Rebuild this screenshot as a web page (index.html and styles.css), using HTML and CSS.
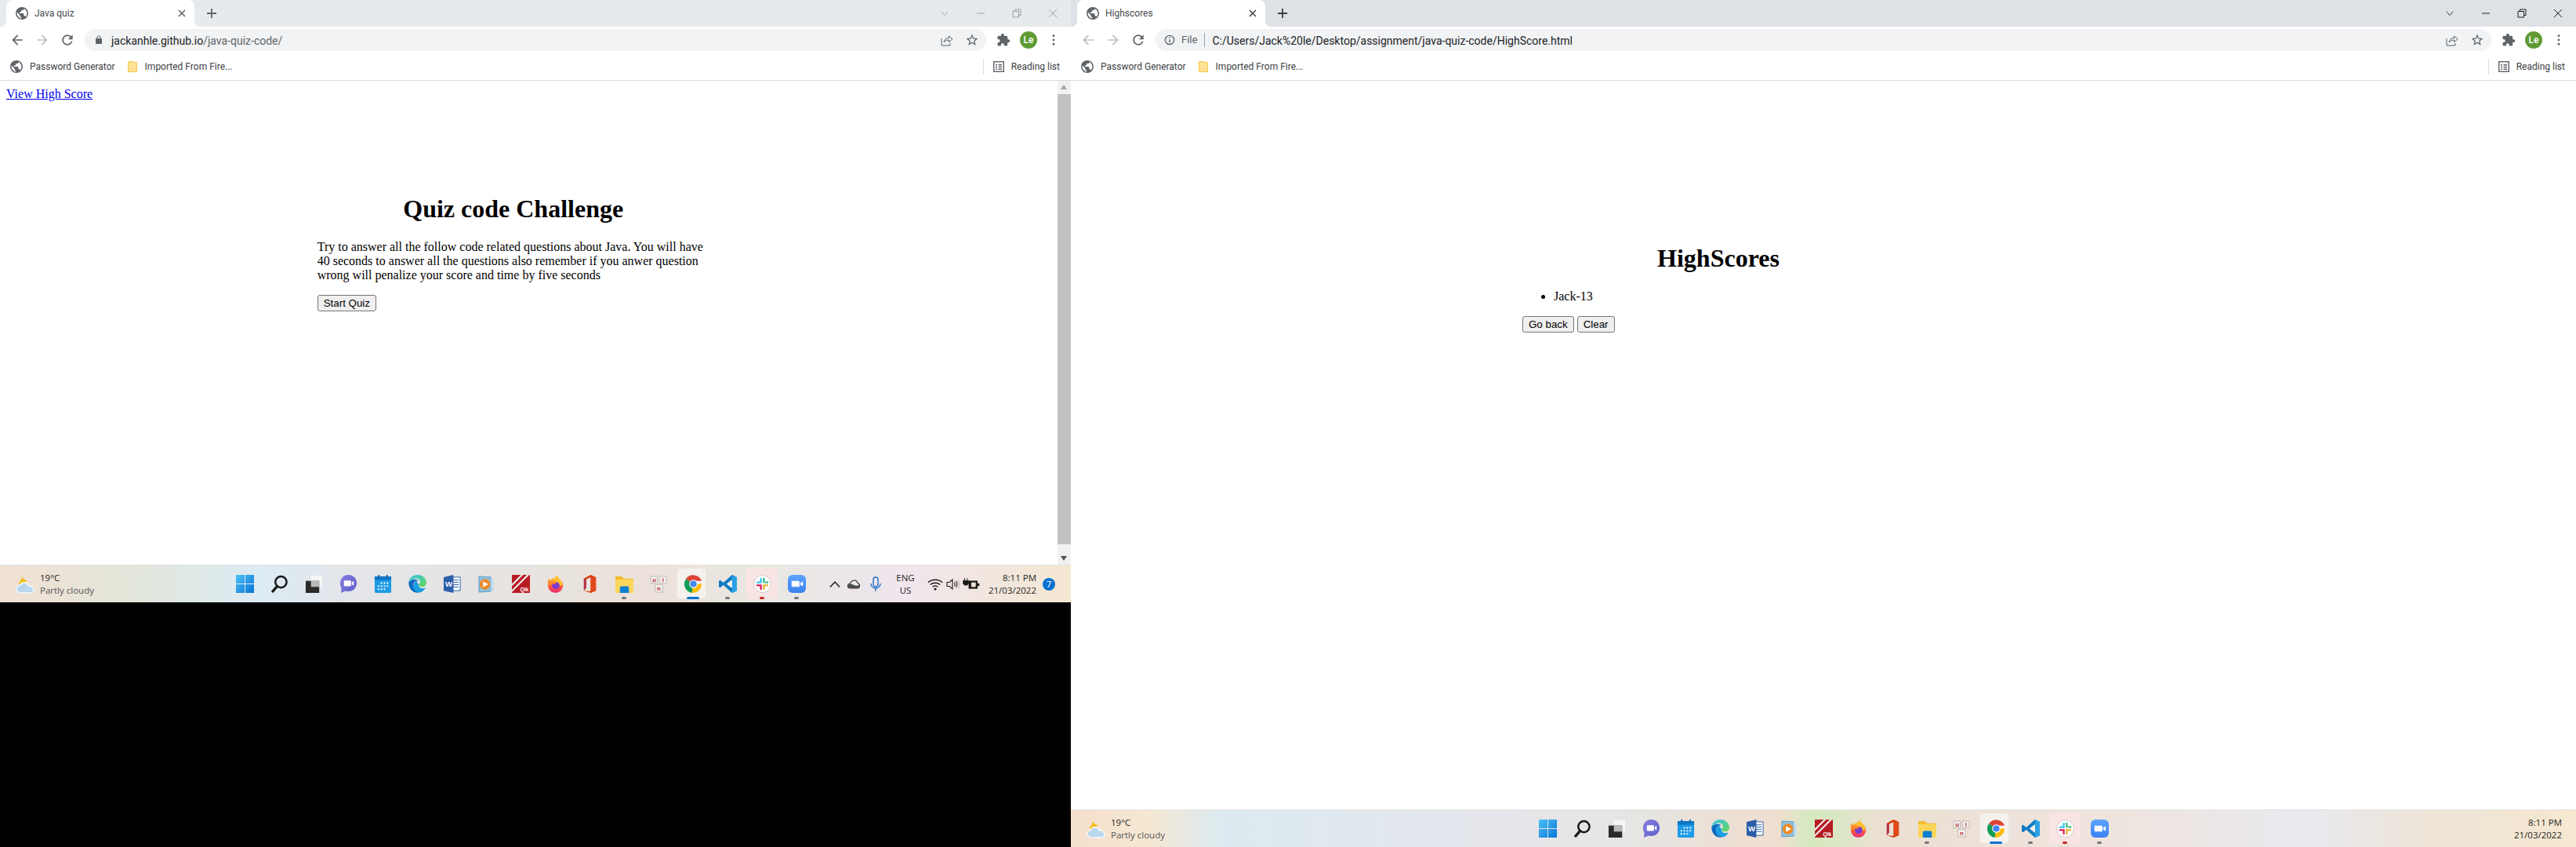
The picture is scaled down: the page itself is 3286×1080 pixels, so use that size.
FILE: index.html
```html
<!DOCTYPE html>
<html lang="en">

<head>
    <meta charset="UTF-8">
    <title>Java quiz</title>
    <link rel="stylesheet" href="styles.css">
</head>

<body>
    <!-- Shared icons -->
    <svg class="sprite" aria-hidden="true">
        <defs>
            <linearGradient id="win-blue" x1="0" y1="0" x2="1" y2="1">
                <stop offset="0" stop-color="#4cc2f7" />
                <stop offset="1" stop-color="#0a74d6" />
            </linearGradient>
            <linearGradient id="chat-purple" x1="0" y1="0" x2="1" y2="1">
                <stop offset="0" stop-color="#8a7ce0" />
                <stop offset="1" stop-color="#5b5fc7" />
            </linearGradient>
            <linearGradient id="edge-green" x1="0" y1="0" x2="1" y2="1">
                <stop offset="0" stop-color="#35c1f1" />
                <stop offset="1" stop-color="#66d853" />
            </linearGradient>
            <linearGradient id="fox-fire" x1="0" y1="0" x2="0" y2="1">
                <stop offset="0" stop-color="#ffc02e" />
                <stop offset="0.55" stop-color="#ff5a36" />
                <stop offset="1" stop-color="#e6297a" />
            </linearGradient>
            <linearGradient id="zoom-blue" x1="0" y1="0" x2="0" y2="1">
                <stop offset="0" stop-color="#5ea4ff" />
                <stop offset="1" stop-color="#3a82f0" />
            </linearGradient>
        </defs>

        <symbol id="i-globe" viewBox="0 0 16 16">
            <circle cx="8" cy="8" r="8" fill="#5f6368" />
            <path fill="#fff" d="M7.2 14.4C4.2 14 1.6 11.300 1.600 8c0-.5.100-1 .2-1.400L5.600 10.400v.8c0 .9.700 1.600 1.600 1.600zM12.700 12.400c-.2-.6-.8-1.200-1.500-1.200h-.8V8.800c0-.4-.4-.8-.8-.8H4.800V6.400h1.600c.4 0 .8-.4.800-.8V4h1.600c.9 0 1.600-.7 1.600-1.600v-.3c2.300.9 4 3.200 4 5.900 0 1.700-.7 3.200-1.700 4.400z" />
        </symbol>
        <symbol id="i-close" viewBox="0 0 12 12">
            <path d="M2 2l8 8M10 2l-8 8" fill="none" stroke="currentColor" stroke-width="1.500" />
        </symbol>
        <symbol id="i-plus" viewBox="0 0 14 14">
            <path d="M7 1v12M1 7h12" fill="none" stroke="currentColor" stroke-width="1.800" />
        </symbol>
        <symbol id="i-back" viewBox="0 0 24 24">
            <path fill="currentColor" d="M20 11H7.830l5.590-5.590L12 4l-8 8 8 8 1.410-1.410L7.830 13H20v-2z" />
        </symbol>
        <symbol id="i-forward" viewBox="0 0 24 24">
            <path fill="currentColor" d="M12 4l-1.410 1.410L16.170 11H4v2h12.170l-5.580 5.590L12 20l8-8z" />
        </symbol>
        <symbol id="i-reload" viewBox="0 0 24 24">
            <path fill="currentColor" d="M17.650 6.350C16.200 4.900 14.210 4 12 4c-4.420 0-7.990 3.580-7.990 8s3.570 8 7.990 8c3.730 0 6.840-2.550 7.730-6h-2.080c-.82 2.330-3.040 4-5.650 4-3.310 0-6-2.690-6-6s2.690-6 6-6c1.660 0 3.140.69 4.220 1.780L13 11h7V4l-2.350 2.350z" />
        </symbol>
        <symbol id="i-lock" viewBox="0 0 24 24">
            <path fill="currentColor" fill-rule="evenodd" d="M18 8h-1V6c0-2.760-2.240-5-5-5S7 3.240 7 6v2H6c-1.100 0-2 .9-2 2v10c0 1.100.9 2 2 2h12c1.100 0 2-.9 2-2V10c0-1.100-.9-2-2-2zM9 8V6c0-1.660 1.340-3 3-3s3 1.340 3 3v2H9z" />
        </symbol>
        <symbol id="i-info" viewBox="0 0 16 16">
            <circle cx="8" cy="8" r="6.500" fill="none" stroke="currentColor" stroke-width="1.500" />
            <path d="M7.200 7h1.600v5H7.200zM7.200 4h1.600v1.600H7.200z" fill="currentColor" />
        </symbol>
        <symbol id="i-share" viewBox="0 0 16 16">
            <path d="M1 6v9h11v-3" fill="none" stroke="currentColor" stroke-width="1" />
            <path d="M4 11c.5-3.500 3-5.500 6.500-5.500V3L15 6.800l-4.500 3.800V8C8 8 5.800 9 4 11z" fill="none" stroke="currentColor" stroke-width="1" />
        </symbol>
        <symbol id="i-star" viewBox="0 0 24 24">
            <path fill="currentColor" d="M22 9.240l-7.190-.62L12 2 9.190 8.630 2 9.240l5.460 4.730L5.820 21 12 17.270 18.180 21l-1.630-7.030L22 9.240zM12 15.400l-3.760 2.270 1-4.280-3.320-2.880 4.380-.38L12 6.100l1.710 4.040 4.380.38-3.320 2.880 1 4.280L12 15.400z" />
        </symbol>
        <symbol id="i-puzzle" viewBox="0 0 24 24">
            <path fill="currentColor" d="M20.500 11H19V7c0-1.100-.9-2-2-2h-4V3.500C13 2.120 11.880 1 10.500 1S8 2.120 8 3.500V5H4c-1.100 0-1.990.9-1.990 2v3.800H3.500c1.490 0 2.700 1.210 2.700 2.700s-1.210 2.700-2.700 2.700H2V20c0 1.100.9 2 2 2h3.800v-1.500c0-1.490 1.210-2.700 2.700-2.700 1.490 0 2.700 1.210 2.700 2.700V22H17c1.100 0 2-.9 2-2v-4h1.500c1.380 0 2.500-1.120 2.500-2.500S21.880 11 20.500 11z" />
        </symbol>
        <symbol id="i-dots" viewBox="0 0 4 16">
            <circle cx="2" cy="2" r="1.600" fill="currentColor" />
            <circle cx="2" cy="8" r="1.600" fill="currentColor" />
            <circle cx="2" cy="14" r="1.600" fill="currentColor" />
        </symbol>
        <symbol id="i-folder" viewBox="0 0 12 14">
            <path d="M.5.500h7l1 1h3v12H.5z" fill="#fde293" stroke="#f2c94c" />
        </symbol>
        <symbol id="i-reading" viewBox="0 0 14 14">
            <rect x=".7" y=".7" width="12.600" height="12.600" fill="none" stroke="#5f6368" stroke-width="1.400" />
            <path d="M3 4h2v1.500H3zM6.500 4H11v1.500H6.500zM3 6.800h2v1.500H3zM6.500 6.800H11v1.500H6.500zM3 9.600h2v1.500H3zM6.500 9.600H11v1.500H6.500z" fill="#5f6368" />
        </symbol>

        <symbol id="a-weather" viewBox="0 0 24 24">
            <path d="M8 0c0 4 2 6 6 7-1 4-6 6-11 4 3-2 5-6 5-11z" fill="#f5bb14" />
            <path d="M7 23c-3.500 0-6-2.200-6-5 0-2.500 2-4.500 4.500-4.500C6.500 10.500 9.500 9 12.500 10c2 .7 3.500 2.200 4 4 3.500 0 6.500 2.200 6.500 5 0 2.500-2 4-4.500 4z" fill="#b9d8ee" stroke="#f4f9fc" stroke-width="1.400" />
        </symbol>
        <symbol id="a-windows" viewBox="0 0 24 24">
            <path d="M0 0h11.500v11.500H0zM12.500 0H24v11.500H12.500zM0 12.500h11.500V24H0zM12.500 12.500H24V24H12.500z" fill="url(#win-blue)" />
        </symbol>
        <symbol id="a-search" viewBox="0 0 24 24">
            <circle cx="14" cy="9.500" r="7.500" fill="none" stroke="#1a1a1a" stroke-width="2.600" />
            <path d="M9 15l-6 7" stroke="#1a1a1a" stroke-width="3.400" stroke-linecap="round" />
        </symbol>
        <symbol id="a-taskview" viewBox="0 0 24 24">
            <rect x="8" y="1" width="15" height="15" fill="#f6f6f6" />
            <rect x="1" y="8" width="18" height="16" fill="#2a2a2a" />
            <rect x="8" y="8" width="11" height="8" fill="#b9b9b9" />
        </symbol>
        <symbol id="a-chat" viewBox="0 0 24 24">
            <path d="M12 0c6.500 0 11 5 11 11s-4.500 11-11 11c-1.500 0-3-.2-4-.7L2 24l.8-6C1.600 16 1 13.500 1 11 1 5 5.500 0 12 0z" fill="url(#chat-purple)" />
            <path d="M7 7.500h7.500c.6 0 1 .4 1 1v5.500c0 .6-.4 1-1 1H7c-.6 0-1-.4-1-1V8.500c0-.6.400-1 1-1zM16.500 10l2.500-2v6.500l-2.500-2z" fill="#fff" />
        </symbol>
        <symbol id="a-calendar" viewBox="0 0 24 24">
            <rect x="1" y="2" width="22" height="22" rx="1.500" fill="#1d9be6" />
            <path d="M1 2h22v5H1z" fill="#0f78c9" />
            <path d="M5.500 0h2v4h-2zM16.500 0h2v4h-2z" fill="#0c5fa6" />
            <path d="M9 10h2v2H9zM13 10h2v2h-2zM17 10h2v2h-2zM5 14h2v2H5zM9 14h2v2H9zM13 14h2v2h-2zM17 14h2v2h-2zM5 18h2v2H5zM9 18h2v2H9zM13 18h2v2h-2z" fill="#fff" />
        </symbol>
        <symbol id="a-edge" viewBox="0 0 24 24">
            <path d="M12 0c7 0 12 5 12 11 0 3-2.500 5-6 5-2.500 0-4.500-1-4.500-2.500 0-2 2-1.500 2-4C15.500 6 12 4 8 5 4 6 1.500 8 .3 10 1 4 6 0 12 0z" fill="url(#edge-green)" />
            <path d="M.3 10C3 5.500 10 4.500 13.500 8c-4-1-7 2-7 6 0 4 3 8 8 9.500C7 25.500 0 19 .3 10z" fill="#0c6cc0" />
            <path d="M13.500 13.500c0 3 3 4.500 5.500 4.500 1.500 0 3-.4 4-1-2 4-5 6.500-9 6.500-5-1.500-7.500-5-7.500-9 0-3 2-6 5-6.500-1 1.500 2 3.500 2 5.500z" fill="#1b9de2" />
        </symbol>
        <symbol id="a-word" viewBox="0 0 24 24">
            <path d="M10 3h13v18H10z" fill="#fff" stroke="#2b5ea8" />
            <path d="M13 7h8M13 10h8M13 13h8M13 16h8" stroke="#2b5ea8" />
            <path d="M1 3l13-3v24L1 21z" fill="#2b5ea8" />
        </symbol>
        <symbol id="a-media" viewBox="0 0 24 24">
            <path d="M2 2l16 1v19L2 23z" fill="#8fc1e0" stroke="#5d9cc4" />
            <path d="M18 3l4 3v16l-4 0z" fill="#c7dced" />
            <circle cx="10" cy="12.500" r="7" fill="#f08a24" />
            <path d="M7.500 8.500l7 4-7 4z" fill="#fff" />
        </symbol>
        <symbol id="a-qlik" viewBox="0 0 24 24">
            <rect width="24" height="24" rx="1" fill="#b71c23" />
            <path d="M0 12L12 0h3L0 15zM0 20L20 0h3L0 23z" fill="#f2f2f2" />
        </symbol>
        <symbol id="a-firefox" viewBox="0 0 24 24">
            <circle cx="12" cy="14" r="10" fill="url(#fox-fire)" />
            <path d="M13 0c1 3 4 4 6 7 2 2 2 5 2 7H8c0-5 3-7 5-14z" fill="#ffc02e" />
            <path d="M3 5c-1 3-1.500 6-1 9l6-2z" fill="#ff8a2b" />
            <circle cx="12.500" cy="14" r="5" fill="#7a3bd1" />
            <path d="M7 11c2-2 5-3 8-1-2 0-3 1-3 2-2 1-4 0-5-1z" fill="#ff7a2f" />
        </symbol>
        <symbol id="a-office" viewBox="0 0 24 24">
            <path d="M13 0l7 3v18l-7 3-9-3 9 1V3L7 6v11l-3 4V5z" fill="#d83b01" />
            <path d="M4 5l3 1v11l-3 4z" fill="#b2314a" />
            <path d="M13 3v19l7-1V3z" fill="#e0491c" />
        </symbol>
        <symbol id="a-explorer" viewBox="0 0 24 24">
            <path d="M0 2h9l2 3h13v19H0z" fill="#f2b92e" />
            <path d="M0 6h24v18H0z" fill="#fdd75c" />
            <path d="M6 17c0-1 1-2 2-2h8c1 0 2 1 2 2v7H6z" fill="#0f7fd1" />
        </symbol>
        <symbol id="a-keys" viewBox="0 0 24 24">
            <path d="M1 2h9v9H1zM13 2h9v9h-9zM7 13h10v10H7z" fill="#f4f1ef" stroke="#bdb8b4" />
        </symbol>
        <symbol id="a-chrome" viewBox="0 0 24 24">
            <path d="M12 12L2 5.500A12 12 0 0 1 23 8H12z" fill="#db4437" />
            <path d="M12 12L10 24A12 12 0 0 1 2 5.500z" fill="#0f9d58" />
            <path d="M12 12H23A12 12 0 0 1 10 24z" fill="#fbbc05" />
            <circle cx="12" cy="12" r="5.500" fill="#fff" />
            <circle cx="12" cy="12" r="4.300" fill="#4285f4" />
        </symbol>
        <symbol id="a-vscode" viewBox="0 0 24 24">
            <path d="M17.500 0L24 3v18l-6.500 3L6 13.500 2 17l-2-1v-8l2-1 4 3.500zM17.500 6.500L10.500 12l7 5.500z" fill="#0f7cc4" fill-rule="evenodd" />
            <path d="M17.500 0L24 3v18l-6.500 3z" fill="#29a1e6" />
            <path d="M17.500 6.500L10.500 12l7 5.500z" fill="#fdf3ee" />
        </symbol>
        <symbol id="a-slack" viewBox="0 0 24 24">
            <circle cx="12" cy="12" r="11.500" fill="#fff" stroke="#c9c3c2" />
            <path d="M10 5v5H5" fill="none" stroke="#36c5f0" stroke-width="2.400" stroke-linecap="round" />
            <path d="M14 5v5" fill="none" stroke="#2eb67d" stroke-width="2.400" stroke-linecap="round" />
            <path d="M19 10h-2" fill="none" stroke="#2eb67d" stroke-width="2.400" stroke-linecap="round" />
            <path d="M14 19v-5h5" fill="none" stroke="#ecb22e" stroke-width="2.400" stroke-linecap="round" />
            <path d="M5 14h5v5" fill="none" stroke="#e01e5a" stroke-width="2.400" stroke-linecap="round" />
        </symbol>
        <symbol id="a-zoom" viewBox="0 0 24 24">
            <rect width="24" height="24" rx="6" fill="url(#zoom-blue)" />
            <path d="M5 8h9c1 0 1.500.6 1.500 1.500V16H6.500C5.500 16 5 15.400 5 14.500zM16.500 11l3.500-2.500v7L16.500 13z" fill="#fff" />
        </symbol>

        <symbol id="t-up" viewBox="0 0 16 16">
            <path d="M2 11.500L8 5l6 6.500" fill="none" stroke="#1a1a1a" stroke-width="1.500" />
        </symbol>
        <symbol id="t-cloud" viewBox="0 0 16 16">
            <path d="M4 13c-2 0-3.500-1.200-3.500-3S2 7 3.500 7C4.500 4.500 6.500 3 9 3c2 0 3.500 1.500 4 3.500 1.500.3 2.500 1.700 2.500 3.200 0 2-1.500 3.300-3.500 3.300z" fill="#e8e8e8" stroke="#262626" stroke-width="1.200" />
            <path d="M1 9c3-2 5-1 7 0s5 1 7 0c0 2-1 4-3 4H4C2 13 1 11 1 9z" fill="#4a4a4a" />
        </symbol>
        <symbol id="t-mic" viewBox="0 0 16 20">
            <rect x="5" y="1" width="6" height="12" rx="3" fill="none" stroke="#2a6fc9" stroke-width="1.400" />
            <path d="M2 9c0 4 3 6 6 6s6-2 6-6M8 15v4" fill="none" stroke="#2a6fc9" stroke-width="1.400" />
        </symbol>
        <symbol id="t-wifi" viewBox="0 0 18 14">
            <path d="M1 5c4.500-4 11.500-4 16 0M3.500 7.500c3-2.700 8-2.700 11 0M6 10c1.700-1.400 4.300-1.400 6 0" fill="none" stroke="#1a1a1a" stroke-width="1.200" />
            <circle cx="9" cy="12.500" r="1.300" fill="#1a1a1a" />
        </symbol>
        <symbol id="t-speaker" viewBox="0 0 18 16">
            <path d="M1 5.500h3L8 2v12l-4-3.500H1z" fill="none" stroke="#1a1a1a" stroke-width="1.100" />
            <path d="M10.500 5.500c1 1.500 1 3.500 0 5M12.500 4c1.500 2.300 1.500 5.700 0 8" fill="none" stroke="#1a1a1a" stroke-width="1.100" />
            <path d="M15 2.500c2 3 2 8 0 11" fill="none" stroke="#bdbdbd" stroke-width="1.100" />
        </symbol>
        <symbol id="t-battery" viewBox="0 0 20 14">
            <path d="M7 3h10v9H7z" fill="#1a1a1a" />
            <path d="M17 6h2v3h-2z" fill="#1a1a1a" />
            <path d="M10 5h5v5h-5z" fill="#f0e4d4" />
            <path d="M2.500 0v3M5.500 0v3M1 3h6v3c0 1-1 2-3 2S1 7 1 6z" fill="#1a1a1a" stroke="#1a1a1a" stroke-width=".8" />
        </symbol>
    </svg>

    <!-- Left window, small with the desktop showing under it -->
    <section class="window window-small">
        <header class="chrome">
            <div class="tab-strip tab-strip-inactive">
                <div class="tab">
                    <svg class="tab-icon"><use href="#i-globe" /></svg>
                    <span class="tab-title">Java quiz</span>
                    <svg class="tab-close"><use href="#i-close" /></svg>
                </div>
                <svg class="new-tab"><use href="#i-plus" /></svg>
                <div class="window-controls">
                    <svg class="control-icon control-chevron" viewBox="0 0 12 12"><path d="M1 3l5 6 5-6" /></svg>
                    <svg class="control-icon" viewBox="0 0 12 12"><path d="M1 6h10" /></svg>
                    <svg class="control-icon" viewBox="0 0 12 12"><path d="M1 3.500h7.500V11H1zM3.500 3.500V1H11v7.500H8.500" /></svg>
                    <svg class="control-icon" viewBox="0 0 12 12"><path d="M1 1l10 10M11 1L1 11" /></svg>
                </div>
            </div>
            <div class="toolbar">
                <svg class="nav-icon"><use href="#i-back" /></svg>
                <svg class="nav-icon nav-disabled"><use href="#i-forward" /></svg>
                <svg class="nav-icon"><use href="#i-reload" /></svg>
                <div class="omnibox">
                    <svg class="omni-lock"><use href="#i-lock" /></svg>
                    <span class="url">jackanhle.github.io<span class="url-path">/java-quiz-code/</span></span>
                    <svg class="omni-share"><use href="#i-share" /></svg>
                    <svg class="omni-star"><use href="#i-star" /></svg>
                </div>
                <svg class="nav-icon nav-puzzle"><use href="#i-puzzle" /></svg>
                <div class="avatar-cell"><span class="avatar">Le</span></div>
                <svg class="nav-icon nav-dots"><use href="#i-dots" /></svg>
            </div>
            <div class="bookmarks">
                <span class="bookmark"><svg class="bookmark-icon"><use href="#i-globe" /></svg>Password Generator</span>
                <span class="bookmark"><svg class="bookmark-folder"><use href="#i-folder" /></svg>Imported From Fire...</span>
                <span class="reading-list"><svg class="bookmark-reading"><use href="#i-reading" /></svg>Reading list</span>
            </div>
        </header>

        <div class="viewport">
            <main class="page">
                <a class="high-score-link" href="#">View High Score</a>
                <div class="panel panel-quiz">
                    <h1>Quiz code Challenge</h1>
                    <p>Try to answer all the follow code related questions about Java. You will have 40 seconds to answer all the questions also remember if you anwer question wrong will penalize your score and time by five seconds</p>
                    <button>Start Quiz</button>
                </div>
            </main>
            <div class="scrollbar">
                <div class="scroll-arrow scroll-arrow-up"></div>
                <div class="scroll-thumb"></div>
                <div class="scroll-arrow scroll-arrow-down"></div>
            </div>
        </div>

        <footer class="taskbar taskbar-small">
            <div class="weather">
                <svg class="weather-icon"><use href="#a-weather" /></svg>
                <div class="weather-text"><span>19°C</span><span class="weather-sub">Partly cloudy</span></div>
            </div>
            <div class="apps apps-small">
                <span class="app"><svg><use href="#a-windows" /></svg></span>
                <span class="app"><svg><use href="#a-search" /></svg></span>
                <span class="app"><svg><use href="#a-taskview" /></svg></span>
                <span class="app"><svg><use href="#a-chat" /></svg></span>
                <span class="app"><svg><use href="#a-calendar" /></svg></span>
                <span class="app"><svg><use href="#a-edge" /></svg></span>
                <span class="app"><svg viewBox="0 0 24 24"><use href="#a-word" /><text x="3" y="15.500" class="icon-word">W</text></svg></span>
                <span class="app"><svg><use href="#a-media" /></svg></span>
                <span class="app"><svg viewBox="0 0 24 24"><use href="#a-qlik" /><text x="11" y="22" class="icon-qlik">Qlk</text></svg></span>
                <span class="app"><svg><use href="#a-firefox" /></svg></span>
                <span class="app"><svg><use href="#a-office" /></svg></span>
                <span class="app app-open"><svg><use href="#a-explorer" /></svg></span>
                <span class="app"><svg viewBox="0 0 24 24"><use href="#a-keys" /><text x="3.500" y="9" class="icon-key">u</text><text x="16.500" y="9" class="icon-key">i</text><text x="9.500" y="21" class="icon-key">n</text></svg></span>
                <span class="app app-active"><svg><use href="#a-chrome" /></svg></span>
                <span class="app app-open"><svg><use href="#a-vscode" /></svg></span>
                <span class="app app-alert"><svg><use href="#a-slack" /></svg></span>
                <span class="app app-open"><svg><use href="#a-zoom" /></svg></span>
            </div>
            <div class="tray">
                <svg class="tray-icon"><use href="#t-up" /></svg>
                <svg class="tray-icon"><use href="#t-cloud" /></svg>
                <svg class="tray-icon tray-mic"><use href="#t-mic" /></svg>
                <div class="tray-lang"><span>ENG</span><span>US</span></div>
                <svg class="tray-icon"><use href="#t-wifi" /></svg>
                <svg class="tray-icon tray-speaker"><use href="#t-speaker" /></svg>
                <svg class="tray-icon"><use href="#t-battery" /></svg>
                <div class="clock"><span>8:11 PM</span><span>21/03/2022</span></div>
                <span class="badge">7</span>
            </div>
        </footer>
    </section>

    <!-- Right window, full height -->
    <section class="window window-large">
        <header class="chrome">
            <div class="tab-strip">
                <div class="tab">
                    <svg class="tab-icon"><use href="#i-globe" /></svg>
                    <span class="tab-title">Highscores</span>
                    <svg class="tab-close tab-close-dark"><use href="#i-close" /></svg>
                </div>
                <svg class="new-tab new-tab-dark"><use href="#i-plus" /></svg>
                <div class="window-controls window-controls-dark">
                    <svg class="control-icon control-chevron" viewBox="0 0 12 12"><path d="M1 3l5 6 5-6" /></svg>
                    <svg class="control-icon" viewBox="0 0 12 12"><path d="M1 6h10" /></svg>
                    <svg class="control-icon" viewBox="0 0 12 12"><path d="M1 3.500h7.500V11H1zM3.500 3.500V1H11v7.500H8.500" /></svg>
                    <svg class="control-icon" viewBox="0 0 12 12"><path d="M1 1l10 10M11 1L1 11" /></svg>
                </div>
            </div>
            <div class="toolbar">
                <svg class="nav-icon nav-disabled"><use href="#i-back" /></svg>
                <svg class="nav-icon nav-disabled"><use href="#i-forward" /></svg>
                <svg class="nav-icon"><use href="#i-reload" /></svg>
                <div class="omnibox">
                    <svg class="omni-info"><use href="#i-info" /></svg>
                    <span class="omni-file">File</span>
                    <span class="url">C:/Users/Jack%20le/Desktop/assignment/java-quiz-code/HighScore.html</span>
                    <svg class="omni-share"><use href="#i-share" /></svg>
                    <svg class="omni-star"><use href="#i-star" /></svg>
                </div>
                <svg class="nav-icon nav-puzzle"><use href="#i-puzzle" /></svg>
                <div class="avatar-cell"><span class="avatar">Le</span></div>
                <svg class="nav-icon nav-dots"><use href="#i-dots" /></svg>
            </div>
            <div class="bookmarks">
                <span class="bookmark"><svg class="bookmark-icon"><use href="#i-globe" /></svg>Password Generator</span>
                <span class="bookmark"><svg class="bookmark-folder"><use href="#i-folder" /></svg>Imported From Fire...</span>
                <span class="reading-list"><svg class="bookmark-reading"><use href="#i-reading" /></svg>Reading list</span>
            </div>
        </header>

        <div class="viewport">
            <main class="page">
                <div class="panel panel-scores">
                    <h1>HighScores</h1>
                    <ul>
                        <li>Jack-13</li>
                    </ul>
                    <button>Go back</button>
                    <button>Clear</button>
                </div>
            </main>
        </div>

        <footer class="taskbar taskbar-large">
            <div class="weather">
                <svg class="weather-icon"><use href="#a-weather" /></svg>
                <div class="weather-text"><span>19°C</span><span class="weather-sub">Partly cloudy</span></div>
            </div>
            <div class="apps apps-large">
                <span class="app"><svg><use href="#a-windows" /></svg></span>
                <span class="app"><svg><use href="#a-search" /></svg></span>
                <span class="app"><svg><use href="#a-taskview" /></svg></span>
                <span class="app"><svg><use href="#a-chat" /></svg></span>
                <span class="app"><svg><use href="#a-calendar" /></svg></span>
                <span class="app"><svg><use href="#a-edge" /></svg></span>
                <span class="app"><svg viewBox="0 0 24 24"><use href="#a-word" /><text x="3" y="15.500" class="icon-word">W</text></svg></span>
                <span class="app"><svg><use href="#a-media" /></svg></span>
                <span class="app"><svg viewBox="0 0 24 24"><use href="#a-qlik" /><text x="11" y="22" class="icon-qlik">Qlk</text></svg></span>
                <span class="app"><svg><use href="#a-firefox" /></svg></span>
                <span class="app"><svg><use href="#a-office" /></svg></span>
                <span class="app app-open"><svg><use href="#a-explorer" /></svg></span>
                <span class="app"><svg viewBox="0 0 24 24"><use href="#a-keys" /><text x="3.500" y="9" class="icon-key">u</text><text x="16.500" y="9" class="icon-key">i</text><text x="9.500" y="21" class="icon-key">n</text></svg></span>
                <span class="app app-active"><svg><use href="#a-chrome" /></svg></span>
                <span class="app app-open"><svg><use href="#a-vscode" /></svg></span>
                <span class="app app-alert"><svg><use href="#a-slack" /></svg></span>
                <span class="app app-open"><svg><use href="#a-zoom" /></svg></span>
            </div>
            <div class="tray tray-plain">
                <div class="clock"><span>8:11 PM</span><span>21/03/2022</span></div>
            </div>
        </footer>
    </section>
</body>

</html>
```

FILE: styles.css
```css
/* Global Styles */
html,
body {
    margin: 0;
    padding: 0;
}

body {
    display: flex;
    align-items: flex-start;
    width: 3286px;
    height: 1080px;
    overflow: hidden;
    background-color: #000;
    font-family: 'Liberation Serif', serif;
    font-size: 16px;
}

.sprite {
    width: 0;
    height: 0;
    flex: none;
}

.window {
    display: flex;
    flex-direction: column;
    flex: none;
    background-color: #fff;
}

.window-small {
    width: 1366px;
    height: 768px;
}

.window-large {
    width: 1920px;
    height: 1080px;
}

/* Browser Chrome */
.chrome {
    flex: none;
    font-family: 'Roboto', sans-serif;
    color: #3c4043;
}

.tab-strip {
    display: flex;
    align-items: center;
    height: 34px;
    padding-left: 8px;
    background-color: #dee1e6;
}

.tab-strip-inactive {
    background-color: #e7eaed;
}

.tab {
    position: relative;
    display: flex;
    align-items: center;
    align-self: flex-end;
    box-sizing: border-box;
    width: 240px;
    height: 34px;
    padding: 0 10px 0 12px;
    background-color: #fff;
    border-radius: 8px 8px 0 0;
}

.tab::before,
.tab::after {
    content: "";
    position: absolute;
    bottom: 0;
    width: 8px;
    height: 8px;
}

.tab::before {
    left: -8px;
    background: radial-gradient(circle at 0 0, transparent 8px, #fff 8.5px);
}

.tab::after {
    right: -8px;
    background: radial-gradient(circle at 100% 0, transparent 8px, #fff 8.5px);
}

.tab-icon {
    width: 16px;
    height: 16px;
    flex: none;
}

.tab-title {
    margin-left: 8px;
    font-size: 12px;
    color: #45494d;
}

.tab-close {
    width: 12px;
    height: 12px;
    margin-left: auto;
    color: #5f6368;
}

.tab-close-dark {
    color: #3c4043;
}

.new-tab {
    width: 14px;
    height: 14px;
    margin-left: 15px;
    color: #5f6368;
}

.new-tab-dark {
    color: #3c4043;
}

.window-controls {
    display: flex;
    margin-left: auto;
    color: #9a9da1;
}

.window-controls-dark {
    color: #202124;
}

.control-icon {
    box-sizing: border-box;
    width: 46px;
    height: 12px;
    fill: none;
    stroke: currentColor;
    stroke-width: 1;
}

.control-chevron {
    height: 10px;
    margin-top: 1px;
}

.toolbar {
    display: flex;
    align-items: center;
    box-sizing: border-box;
    height: 34px;
    padding: 0 6px;
    background-color: #fff;
}

.nav-icon {
    flex: none;
    box-sizing: border-box;
    width: 32px;
    height: 20px;
    color: #5f6368;
}

.nav-disabled {
    color: #bdc1c6;
}

.nav-puzzle {
    height: 18px;
}

.nav-dots {
    height: 14px;
}

.omnibox {
    display: flex;
    flex: 1;
    align-items: center;
    height: 28px;
    margin: 0 6px;
    padding-left: 12px;
    background-color: #f1f3f4;
    border-radius: 14px;
}

.omni-lock {
    width: 12px;
    height: 14px;
    color: #5f6368;
    margin-right: 10px;
}

.omni-info {
    width: 14px;
    height: 14px;
    margin-left: -1px;
    color: #5f6368;
}

.omni-file {
    height: 18px;
    margin-left: 8px;
    padding-right: 9px;
    margin-right: 9px;
    border-right: 1px solid #9aa0a6;
    font-size: 13px;
    line-height: 18px;
    color: #5f6368;
}

.url {
    padding-top: 2px;
    font-size: 14px;
    color: #202124;
}

.url-path {
    color: #5f6368;
}

.omni-share {
    width: 16px;
    height: 16px;
    margin-left: auto;
    color: #5f6368;
}

.omni-star {
    width: 18px;
    height: 18px;
    margin: 0 9px 0 15px;
    color: #5f6368;
}

.avatar-cell {
    display: flex;
    flex: none;
    justify-content: center;
    width: 32px;
}

.avatar {
    display: flex;
    align-items: center;
    justify-content: center;
    width: 22px;
    height: 22px;
    border-radius: 50%;
    background-color: #5f9b32;
    color: #fff;
    font-size: 12px;
    font-weight: 500;
}

.bookmarks {
    display: flex;
    align-items: center;
    height: 34px;
    padding: 0 14px 0 13px;
    border-bottom: 1px solid #dadce0;
    font-size: 12px;
    color: #3c4043;
}

.bookmark {
    display: flex;
    align-items: center;
    margin-right: 16px;
}

.bookmark-icon {
    width: 16px;
    height: 16px;
    margin-right: 9px;
}

.bookmark-folder {
    width: 12px;
    height: 14px;
    margin-right: 10px;
}

.reading-list {
    display: flex;
    align-items: center;
    height: 20px;
    margin-left: auto;
    padding-left: 12px;
    border-left: 1px solid #dadce0;
}

.bookmark-reading {
    width: 14px;
    height: 14px;
    margin-right: 9px;
}

/* Page Content */
.viewport {
    display: flex;
    flex: 1;
    min-height: 0;
}

.page {
    flex: 1;
    min-width: 0;
}

.high-score-link {
    display: inline-block;
    margin: 8px 0 0 8px;
    color: #0000ee;
}

.panel {
    width: 500px;
    margin-left: 30%;
}

.panel-quiz {
    margin-top: 119px;
}

.panel-scores {
    margin-top: 208px;
}

h1 {
    margin: 0 0 21.44px;
    font-size: 32px;
    text-align: center;
}

p {
    margin: 0 0 16px;
}

ul {
    margin: 0 0 16px;
    padding-left: 40px;
}

button {
    padding: 2px 7px;
    border: 1px solid #767676;
    border-radius: 3px;
    background-color: #efefef;
    font-family: 'Liberation Sans', sans-serif;
    font-size: 13.333px;
    color: #000;
}

/* Scrollbar */
.scrollbar {
    display: flex;
    flex: none;
    flex-direction: column;
    width: 17px;
    background-color: #f1f1f1;
}

.scroll-arrow {
    position: relative;
    flex: none;
    height: 17px;
}

.scroll-arrow::after {
    content: "";
    position: absolute;
    left: 4px;
    border-left: 4.5px solid transparent;
    border-right: 4.5px solid transparent;
}

.scroll-arrow-up::after {
    top: 5px;
    border-bottom: 6px solid #a3a3a3;
}

.scroll-arrow-down::after {
    top: 6px;
    border-top: 6px solid #505050;
}

.scroll-thumb {
    flex: 1;
    background-color: #c1c1c1;
    margin-bottom: 9px;
}

/* Taskbar */
.taskbar {
    display: flex;
    flex: none;
    align-items: center;
    box-sizing: border-box;
    height: 48px;
    border-top: 1px solid #e3e3e0;
    font-family: 'Open Sans', sans-serif;
    font-size: 11.5px;
    color: #1f1f1f;
}

.taskbar-small {
    background: linear-gradient(90deg, #f1e0d3 0, #e3e6da 12%, #dcebf3 24%, #e4e6ea 33%, #e7e3df 50%, #ece1da 60%, #e9e8e2 72%, #ece5ea 82%, #f0e6ee 84%, #f2e7da 95%, #f5e7d3 100%);
}

.taskbar-large {
    background: linear-gradient(90deg, #f4dfcd 0, #f6e7d2 5%, #dcebf1 10%, #e5e6ec 28%, #e6e5e2 38%, #eddfd4 44%, #f0dfd0 47%, #d6e8c0 49%, #d8e8c2 50.500%, #ecdfd3 54%, #efe5df 70%, #e9e9ef 82%, #eee4d8 90%, #f6e8d0 100%);
}

.weather {
    display: flex;
    flex: none;
    align-items: center;
    width: 290px;
    padding-left: 20px;
    box-sizing: border-box;
}

.weather-icon {
    flex: none;
    width: 24px;
    height: 24px;
    margin-right: 7px;
}

.weather-text,
.tray-lang,
.clock {
    display: flex;
    flex-direction: column;
    line-height: 16px;
}

.weather-sub {
    color: #555;
}

.apps {
    display: flex;
    flex: none;
}

.apps-large {
    margin-left: 296px;
}

.app {
    position: relative;
    display: flex;
    align-items: center;
    justify-content: center;
    width: 44px;
    height: 47px;
}

.app svg {
    position: relative;
    width: 23px;
    height: 23px;
}

.app-open::after,
.app-active::after,
.app-alert::after {
    content: "";
    position: absolute;
    left: 19px;
    top: 40px;
    width: 6px;
    height: 3px;
    border-radius: 2px;
    background-color: #73767a;
}

.app-active::before {
    content: "";
    position: absolute;
    left: 2px;
    top: 4px;
    width: 36px;
    height: 38px;
    border-radius: 4px;
    background-color: #f5f2ee;
    box-shadow: 3px 0 0 -1px #ebe7e2;
}

.app-active::after {
    left: 14px;
    width: 16px;
    background-color: #0a74d6;
}

.app-alert::before {
    content: "";
    position: absolute;
    left: 2px;
    top: 3px;
    width: 40px;
    height: 40px;
    border-radius: 4px;
    background-color: #f9e4e4;
}

.app-alert::after {
    background-color: #c42b1c;
}

.tray {
    display: flex;
    align-items: center;
    margin-left: auto;
    padding-right: 20px;
}

.tray-plain {
    padding-right: 18px;
}

.tray-plain .clock {
    margin-right: 0;
}

.tray-icon {
    flex: none;
    width: 24px;
    height: 16px;
}

.tray-mic {
    height: 20px;
    margin-left: 4px;
}

.tray-lang {
    align-items: center;
    width: 40px;
    margin: 0 6px;
}

.tray-speaker {
    margin: 0 -1px;
}

.clock {
    align-items: flex-end;
    width: 71px;
    margin-right: 8px;
}

.badge {
    display: flex;
    align-items: center;
    justify-content: center;
    width: 16px;
    height: 16px;
    border-radius: 50%;
    background-color: #0a6fd0;
    color: #fff;
}

.icon-word {
    font-family: 'Liberation Sans', sans-serif;
    font-size: 10px;
    font-weight: 700;
    fill: #fff;
}

.icon-qlik {
    font-family: 'Liberation Sans', sans-serif;
    font-size: 7px;
    font-weight: 700;
    fill: #fff;
}

.icon-key {
    font-family: 'Liberation Sans', sans-serif;
    font-size: 8px;
    font-weight: 700;
    fill: #b3282d;
}
```
